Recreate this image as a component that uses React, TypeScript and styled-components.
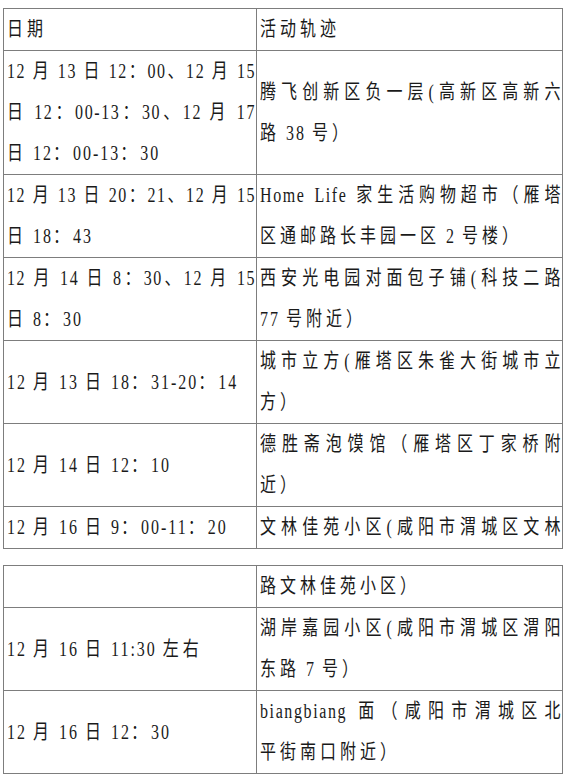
import { Fragment } from 'react';
import styled, { createGlobalStyle } from 'styled-components';

const GlobalStyle = createGlobalStyle`
  html, body {
    margin: 0;
    padding: 0;
    background: #ffffff;
    overflow: hidden;
  }
  body {
    font-family: "Liberation Serif", "Noto Sans CJK SC", serif;
    color: #1a1a1a;
  }
`;

const Page = styled.div`
  display: flex;
  flex-direction: column;
  gap: 16px;
  padding: 8px 0 0 3px;
  width: 559px;
`;

const Table = styled.table`
  border-collapse: collapse;
  table-layout: fixed;
  width: 559px;
  font-size: 20px;
`;

const Cell = styled.td<{ $wide?: boolean }>`
  box-sizing: border-box;
  width: ${(p) => (p.$wide ? '306px' : '253px')};
  border: 1px solid #7d7d7d;
  padding: 0 0 0 3px;
  vertical-align: middle;
  line-height: 41px;
  overflow: hidden;
`;

// chinese characters sit on a wider grid than the latin digits
const Han = styled.span``;

/* the source text is a narrow song face: draw it 20px tall, squeezed to 80% width */
const Line = styled.span<{ $full?: boolean }>`
  display: block;
  width: 125%;
  transform: scaleX(0.8);
  transform-origin: left center;
  letter-spacing: ${(p) => (p.$full ? '2px' : '2.5px')};
  white-space: ${(p) => (p.$full ? 'normal' : 'pre')};
  text-align: ${(p) => (p.$full ? 'justify' : 'left')};
  text-align-last: ${(p) => (p.$full ? 'justify' : 'left')};

  ${Han} {
    letter-spacing: ${(p) => (p.$full ? '2px' : '5px')};
  }
`;

type Row = { date: string[]; place: string[]; spill?: boolean };

const firstTable: Row[] = [
  {
    date: ['12 月 13 日 12：00、12 月 15', '日 12：00-13：30、12 月 17', '日 12：00-13：30'],
    place: ['腾飞创新区负一层(高新区高新六', '路 38 号）'],
  },
  {
    date: ['12 月 13 日 20：21、12 月 15', '日 18：43'],
    place: ['Home Life 家生活购物超市（雁塔', '区通邮路长丰园一区 2 号楼）'],
  },
  {
    date: ['12 月 14 日 8：30、12 月 15', '日 8：30'],
    place: ['西安光电园对面包子铺(科技二路', '77 号附近）'],
  },
  {
    date: ['12 月 13 日 18：31-20：14'],
    place: ['城市立方(雁塔区朱雀大街城市立', '方）'],
  },
  {
    date: ['12 月 14 日 12：10'],
    place: ['德胜斋泡馍馆（雁塔区丁家桥附', '近）'],
  },
  {
    date: ['12 月 16 日 9：00-11：20'],
    place: ['文林佳苑小区(咸阳市渭城区文林'],
    spill: true,
  },
];

const secondTable: Row[] = [
  { date: [''], place: ['路文林佳苑小区）'] },
  {
    date: ['12 月 16 日 11:30 左右'],
    place: ['湖岸嘉园小区(咸阳市渭城区渭阳', '东路 7 号）'],
  },
  {
    date: ['12 月 16 日 12：30'],
    place: ['biangbiang 面（咸阳市渭城区北', '平街南口附近）'],
  },
];

const hanRun = /([\u3000-\u303f\u4e00-\u9fff\uff00-\uffef]+)/;

function Text({ value }: { value: string }) {
  if (!value) return <>{'\u00a0'}</>;
  return (
    <>
      {value.split(hanRun).map((part, i) =>
        i % 2 === 1 ? <Han key={i}>{part}</Han> : <Fragment key={i}>{part}</Fragment>,
      )}
    </>
  );
}

function Lines({ lines, spill }: { lines: string[]; spill?: boolean }) {
  return (
    <>
      {lines.map((text, i) => (
        <Line key={i} $full={spill || i < lines.length - 1}>
          <Text value={text} />
        </Line>
      ))}
    </>
  );
}

function Rows({ rows }: { rows: Row[] }) {
  return (
    <>
      {rows.map((row, i) => (
        <tr key={i}>
          <Cell>
            <Lines lines={row.date} />
          </Cell>
          <Cell $wide>
            <Lines lines={row.place} spill={row.spill} />
          </Cell>
        </tr>
      ))}
    </>
  );
}

export default function App() {
  return (
    <Page>
      <GlobalStyle />
      <Table>
        <tbody>
          <tr>
            <Cell>
              <Line>
                <Text value="日期" />
              </Line>
            </Cell>
            <Cell $wide>
              <Line>
                <Text value="活动轨迹" />
              </Line>
            </Cell>
          </tr>
          <Rows rows={firstTable} />
        </tbody>
      </Table>
      <Table>
        <tbody>
          <Rows rows={secondTable} />
        </tbody>
      </Table>
    </Page>
  );
}
